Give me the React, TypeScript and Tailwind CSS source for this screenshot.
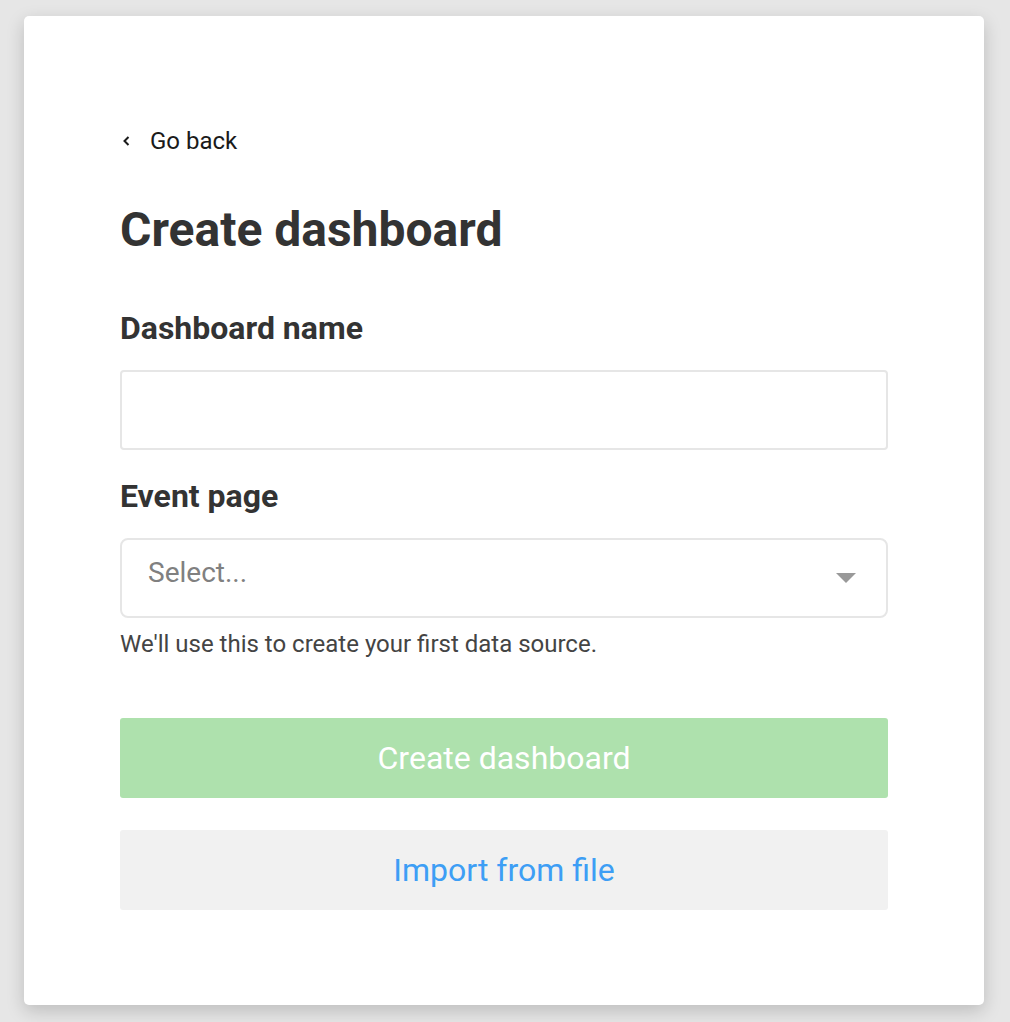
export default function App() {
  return (
    <div
      className="min-h-[1022px] bg-[#e6e6e6] px-6 pt-4 pb-4"
      style={{ fontFamily: "Roboto, 'Noto Sans', sans-serif" }}
    >
      <div className="h-[989px] w-[960px] rounded-[5px] bg-white px-24 pt-[111px] shadow-[0_6px_18px_rgba(0,0,0,0.18)]">
        <a href="#" className="flex h-[28px] w-fit items-center text-[24px] leading-[28px] text-[#1a1a1a]">
          <svg width="9" height="12" viewBox="0 0 9 12" className="ml-[2px] mr-[19px]" aria-hidden>
            <path d="M6.5 2 L2.5 6 L6.5 10" fill="none" stroke="#1a1a1a" strokeWidth="2" />
          </svg>
          Go back
        </a>

        <h1 className="mt-[47px] text-[48px] font-bold leading-[56px] text-[#333]">
          Create dashboard
        </h1>

        <label className="mt-[52px] block text-[32px] font-bold leading-[36px] text-[#333]">
          Dashboard name
        </label>
        <input
          type="text"
          className="mt-[24px] block h-[80px] w-full rounded-[4px] border-2 border-[#e6e6e6] px-7 text-[28px] text-[#333] outline-none"
        />

        <label className="mt-[28px] block text-[32px] font-bold leading-[36px] text-[#333]">
          Event page
        </label>
        <div className="mt-[24px] flex h-[80px] w-full items-center justify-between rounded-[8px] border-2 border-[#e6e6e6] pl-[26px] pr-[30px]">
          <span className="pb-[10px] text-[28px] leading-[32px] text-[#808080]">Select...</span>
          <svg width="20" height="10" viewBox="0 0 20 10" aria-hidden>
            <path d="M0 0 H20 L10 10 Z" fill="#999" />
          </svg>
        </div>
        <p className="mt-[12px] text-[24px] leading-[28px] text-[#444]">
          We'll use this to create your first data source.
        </p>

        <button
          type="button"
          className="mt-[60px] flex h-[80px] w-full items-center justify-center rounded-[3px] bg-[#aee1ad] text-[32px] leading-[36px] text-white"
        >
          Create dashboard
        </button>
        <button
          type="button"
          className="mt-8 flex h-[80px] w-full items-center justify-center rounded-[3px] bg-[#f1f1f1] text-[32px] leading-[36px] text-[#3d9ef5]"
        >
          Import from file
        </button>
      </div>
    </div>
  );
}
